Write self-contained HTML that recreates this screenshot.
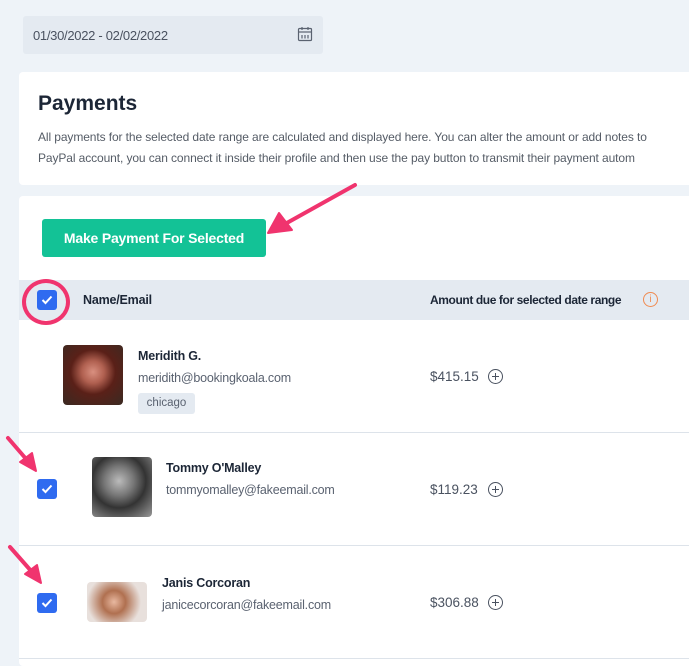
<!DOCTYPE html>
<html><head><style>
*{margin:0;padding:0;box-sizing:border-box}
body{width:689px;height:660px;background:#eef3f8;font-family:"Liberation Sans",sans-serif;position:relative;overflow:hidden;color:#1c2636}
.a{position:absolute;white-space:nowrap}
.cb{position:absolute;width:20px;height:20px;background:#2f6bf0;border-radius:3px}
.cb svg{position:absolute;left:4px;top:5px}
.av{position:absolute;border-radius:4px}
.nm{font-weight:bold;font-size:12.5px;color:#1c2636;letter-spacing:-0.2px}
.em{font-size:12.5px;color:#5a6270;letter-spacing:-0.2px}
.amt{font-size:13.5px;color:#4a5260}
.pl{position:absolute;width:15px;height:15px;border:1.3px solid #4a5260;border-radius:50%}
.pl:before{content:"";position:absolute;left:3px;top:6px;width:7px;height:1.3px;background:#4a5260}
.pl:after{content:"";position:absolute;left:6px;top:3px;width:1.3px;height:7px;background:#4a5260}
</style></head><body>
<div class="a" style="left:23px;top:16px;width:300px;height:38px;background:#e4eaf1;border-radius:3px"></div>
<div class="a" style="left:33px;top:28px;font-size:13px;color:#4a5260;letter-spacing:-0.3px">01/30/2022 - 02/02/2022</div>
<svg class="a" style="left:297px;top:26px" width="16" height="16" viewBox="0 0 16 16" fill="none" stroke="#5a6270" stroke-width="1.2"><rect x="1.5" y="2.5" width="13" height="12" rx="1"/><line x1="1.5" y1="6" x2="14.5" y2="6"/><line x1="5" y1="1" x2="5" y2="4"/><line x1="11" y1="1" x2="11" y2="4"/><line x1="5" y1="9" x2="5" y2="12.5"/><line x1="8" y1="9" x2="8" y2="12.5"/><line x1="11" y1="9" x2="11" y2="12.5"/></svg>

<div class="a" style="left:19px;top:72px;width:680px;height:113px;background:#fff;border-radius:4px"></div>
<div class="a" style="left:38px;top:92px;font-size:21px;font-weight:bold;color:#1c2636">Payments</div>
<div class="a" style="left:38px;top:127px;font-size:12px;color:#555c66;line-height:21px;letter-spacing:-0.1px">All payments for the selected date range are calculated and displayed here. You can alter the amount or add notes to<br>PayPal account, you can connect it inside their profile and then use the pay button to transmit their payment autom</div>

<div class="a" style="left:19px;top:196px;width:680px;height:470px;background:#fff;border-radius:4px"></div>
<div class="a" style="left:42px;top:219px;width:224px;height:38px;background:#13c296;border-radius:3px;color:#fff;font-weight:bold;font-size:14px;text-align:center;line-height:38px;letter-spacing:-0.2px">Make Payment For Selected</div>

<div class="a" style="left:19px;top:280px;width:680px;height:40px;background:#e4eaf1"></div>
<div class="a nm" style="left:83px;top:293px">Name/Email</div>
<div class="a nm" style="left:430px;top:293px;font-size:12px;letter-spacing:-0.4px">Amount due for selected date range</div>
<div class="a" style="left:643px;top:292px;width:15px;height:15px;border:1.3px solid #f08a50;border-radius:50%;color:#f08a50;font-size:10px;text-align:center;line-height:13px">i</div>

<div class="cb" style="left:37px;top:290px"><svg width="12" height="10"><path d="M1.5 5l3 3 6-6.5" stroke="#fff" stroke-width="2" fill="none"/></svg></div>
<div class="a" style="left:22px;top:279px;width:48px;height:46px;border:4px solid #f0346e;border-radius:50%"></div>

<div class="a" style="left:19px;top:432px;width:680px;height:1px;background:#dde3ea"></div>
<div class="a" style="left:19px;top:545px;width:680px;height:1px;background:#dde3ea"></div>
<div class="a" style="left:19px;top:658px;width:680px;height:1px;background:#dde3ea"></div>

<div class="av" style="left:63px;top:345px;width:60px;height:60px;background:radial-gradient(circle at 50% 45%,#d99080 0,#b06050 25%,#5a2018 50%,#3a2a22 100%)"></div>
<div class="a nm" style="left:138px;top:349px">Meridith G.</div>
<div class="a em" style="left:138px;top:371px">meridith@bookingkoala.com</div>
<div class="a" style="left:138px;top:393px;width:57px;height:21px;background:#e4eaf1;border-radius:3px;font-size:11.5px;color:#5a6270;text-align:center;line-height:21px">chicago</div>
<div class="a amt" style="left:430px;top:369px">$415.15</div><div class="pl" style="left:488px;top:369px"></div>

<div class="cb" style="left:37px;top:479px"><svg width="12" height="10"><path d="M1.5 5l3 3 6-6.5" stroke="#fff" stroke-width="2" fill="none"/></svg></div>
<div class="av" style="left:92px;top:457px;width:60px;height:60px;background:radial-gradient(circle at 45% 40%,#bbb 0,#777 30%,#333 55%,#999 100%)"></div>
<div class="a nm" style="left:166px;top:461px">Tommy O'Malley</div>
<div class="a em" style="left:166px;top:483px">tommyomalley@fakeemail.com</div>
<div class="a amt" style="left:430px;top:482px">$119.23</div><div class="pl" style="left:488px;top:482px"></div>

<div class="cb" style="left:37px;top:593px"><svg width="12" height="10"><path d="M1.5 5l3 3 6-6.5" stroke="#fff" stroke-width="2" fill="none"/></svg></div>
<div class="av" style="left:87px;top:582px;width:60px;height:40px;background:radial-gradient(circle at 45% 50%,#e8b8a0 0,#b07050 30%,#e8e0dc 70%)"></div>
<div class="a nm" style="left:162px;top:576px">Janis Corcoran</div>
<div class="a em" style="left:162px;top:598px">janicecorcoran@fakeemail.com</div>
<div class="a amt" style="left:430px;top:595px">$306.88</div><div class="pl" style="left:488px;top:595px"></div>

<svg class="a" style="left:0;top:0" width="689" height="660" fill="#f0346e" stroke="#f0346e" stroke-width="4" stroke-linecap="round" stroke-linejoin="round">
<path d="M355 185 L285 224" fill="none"/><path d="M268 233 L279 213 L292 230 Z" stroke-width="2"/>
<path d="M8 438 L27 460" fill="none"/><path d="M36 471 L20 462 L32 453 Z" stroke-width="2"/>
<path d="M10 547 L32 572" fill="none"/><path d="M41 583 L25 574 L37 565 Z" stroke-width="2"/>
</svg>
</body></html>
